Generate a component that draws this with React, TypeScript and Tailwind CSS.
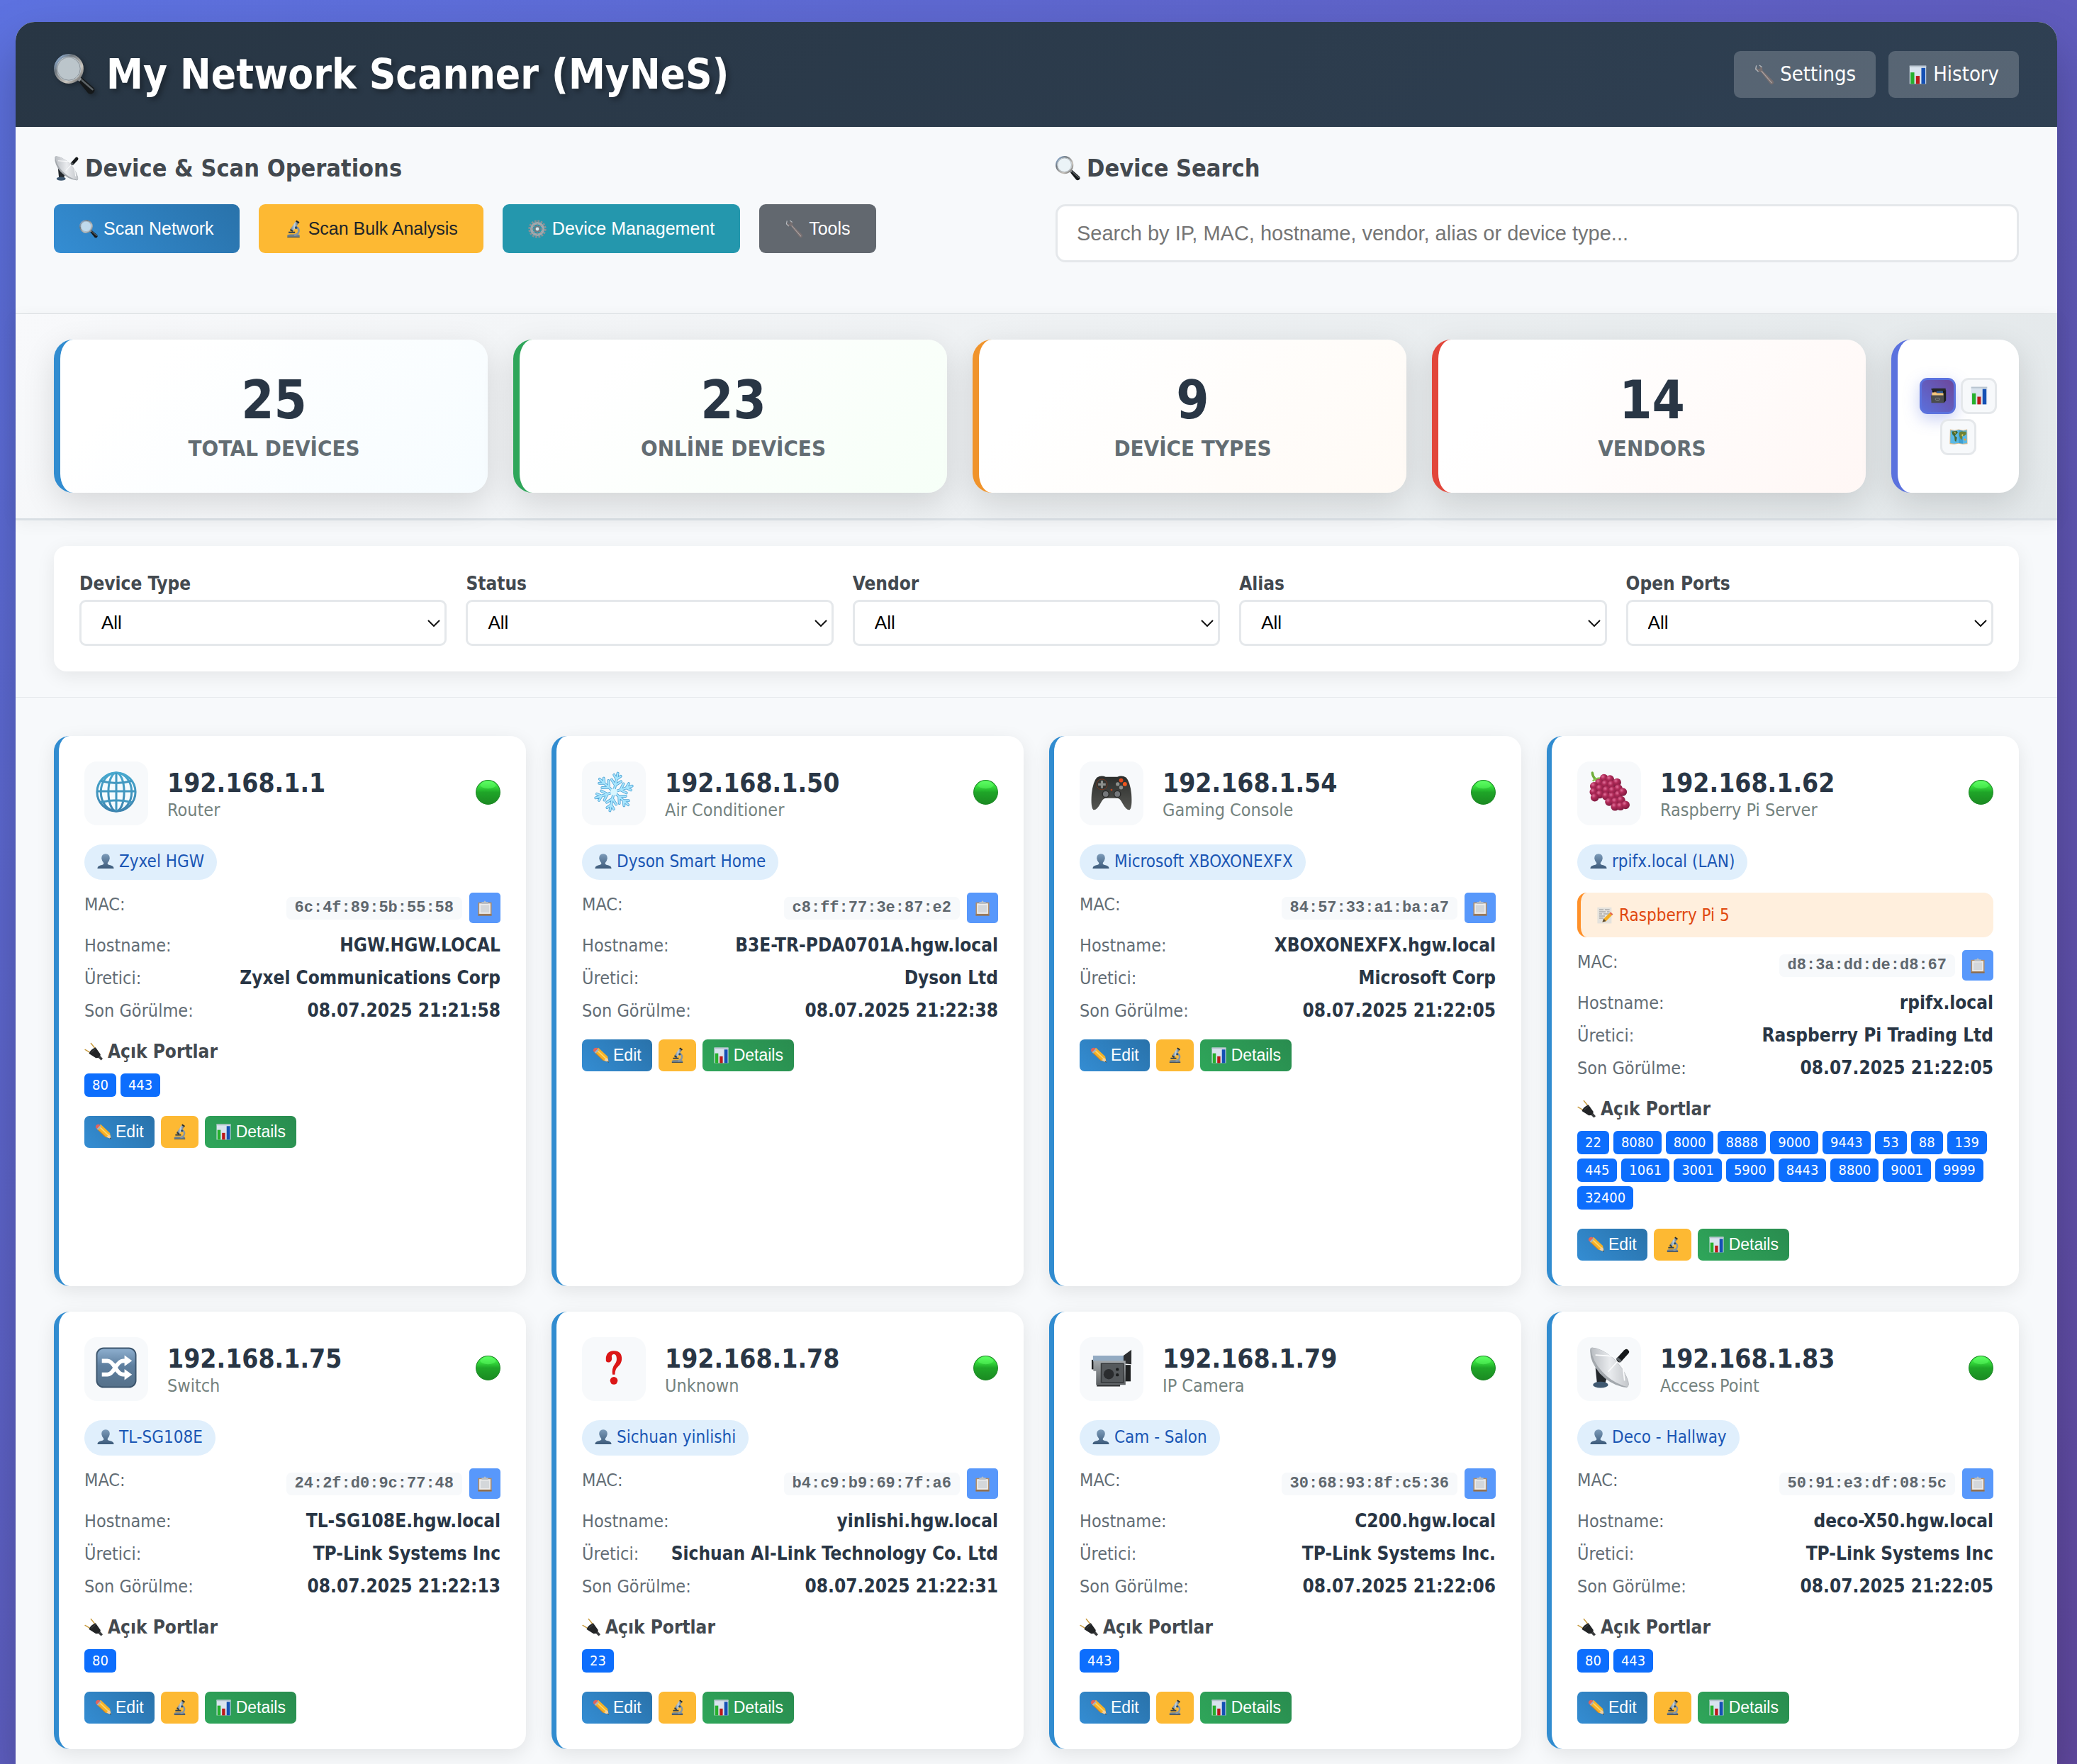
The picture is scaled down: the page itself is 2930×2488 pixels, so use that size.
import React from "react";

const SANS =
  "font-['DejaVu_Sans_Condensed','DejaVu_Sans',sans-serif]";

type IconName =
  | "magnifier"
  | "dish"
  | "microscope"
  | "gear"
  | "wrench"
  | "chart"
  | "filebox"
  | "map"
  | "globe"
  | "snowflake"
  | "gamepad"
  | "grapes"
  | "shuffle"
  | "question"
  | "camera"
  | "person"
  | "clipboard"
  | "plug"
  | "pencil"
  | "memo"
  | "online";

function Defs() {
  return (
    <svg width="0" height="0" className="absolute" aria-hidden="true">
      <defs>
        <linearGradient id="metal" x1="0" y1="0" x2="1" y2="1">
          <stop offset="0" stopColor="#9cc3f0" />
          <stop offset="0.3" stopColor="#6d757c" />
          <stop offset="0.7" stopColor="#c9c4bd" />
          <stop offset="1" stopColor="#55595c" />
        </linearGradient>
        <linearGradient id="dishFace" x1="0" y1="0" x2="1" y2="0">
          <stop offset="0" stopColor="#b9bdc2" />
          <stop offset="0.5" stopColor="#e9ebee" />
          <stop offset="1" stopColor="#c4c7cb" />
        </linearGradient>
        <linearGradient id="steel" x1="0" y1="0" x2="1" y2="0">
          <stop offset="0" stopColor="#5d7183" />
          <stop offset="0.5" stopColor="#c4d2dc" />
          <stop offset="1" stopColor="#4a5b6a" />
        </linearGradient>
        <linearGradient id="greenBall" x1="0" y1="0" x2="0" y2="1">
          <stop offset="0" stopColor="#5dff63" />
          <stop offset="0.25" stopColor="#35dd3c" />
          <stop offset="0.5" stopColor="#1fa528" />
          <stop offset="1" stopColor="#1b8a22" />
        </linearGradient>
        <linearGradient id="personFill" x1="0" y1="0" x2="0" y2="1">
          <stop offset="0" stopColor="#7d9cba" />
          <stop offset="1" stopColor="#3c5a7a" />
        </linearGradient>
        <linearGradient id="tile" x1="0" y1="0" x2="0" y2="1">
          <stop offset="0" stopColor="#8fb0d0" />
          <stop offset="0.45" stopColor="#5e7f9f" />
          <stop offset="1" stopColor="#557089" />
        </linearGradient>
        <linearGradient id="padBody" x1="0" y1="0" x2="0" y2="1">
          <stop offset="0" stopColor="#2b2d2b" />
          <stop offset="1" stopColor="#555652" />
        </linearGradient>
        <radialGradient id="grape" cx="0.35" cy="0.3" r="0.8">
          <stop offset="0" stopColor="#e0709a" />
          <stop offset="0.35" stopColor="#b02a58" />
          <stop offset="1" stopColor="#74163a" />
        </radialGradient>
        <linearGradient id="camBody" x1="0" y1="0" x2="0" y2="1">
          <stop offset="0" stopColor="#a3a8ab" />
          <stop offset="1" stopColor="#5c6063" />
        </linearGradient>
        <linearGradient id="glove" x1="0" y1="0" x2="0" y2="1">
          <stop offset="0" stopColor="#48a9cf" />
          <stop offset="1" stopColor="#3d83ae" />
        </linearGradient>
      </defs>
    </svg>
  );
}

const GRAPES: [number, number][] = [
  [9, 4], [12.5, 4.6], [6.2, 6.6], [9.8, 7.4], [13.4, 7.8], [16.6, 6.4], [3.2, 8.6], [6.6, 10],
  [10.4, 11], [14, 11.2], [17.4, 10], [3, 12], [6.6, 13.4], [10.2, 14.4], [13.8, 14.6],
  [17.4, 13.6], [20, 12], [3.6, 15.2], [12, 17.8], [15.6, 17.6], [19, 16.8], [15.4, 20.6], [18.6, 20.4], [21.6, 19.6],
];

const drawings: Record<IconName, React.ReactNode> = {
  magnifier: (
    <>
      <path d="M14 15.6 16 13.6 23.2 19.8Q24.4 21.4 23 22.8 21.6 24 20 23Z" fill="#15181a" />
      <path d="M16.4 15.4 22.6 20.8" stroke="#5c6266" strokeWidth="1" strokeLinecap="round" />
      <path d="M13.4 13.4 15.6 15.4" stroke="#8d9195" strokeWidth="2.2" />
      <circle cx="8.7" cy="8.7" r="7.9" fill="#e8f1f6" fillOpacity="0.78" stroke="url(#metal)" strokeWidth="1.5" />
      <circle cx="8.7" cy="8.7" r="6.7" fill="none" stroke="#8b9298" strokeWidth="0.4" />
    </>
  ),
  dish: (
    <>
      <path d="M4 12 10.6 18 9.4 22H5Z" fill="#23282c" />
      <ellipse cx="7" cy="22" rx="4.4" ry="1.8" fill="#3f5870" />
      <path d="M1 0.8Q0.2 8 6.6 15.4 13.6 22.8 22.4 23.6 24 22.8 23.2 20 21 12.6 14.4 6.4 7.6 0.6 2 0.2Z" fill="#a3a8ad" />
      <path d="M1.4 0.8Q2 8 8 14.4 14 21 22.6 23.2 23.8 22.4 22.8 19.4 20.6 12.4 14.2 6.4 7.6 0.6 2 0.4Z" fill="url(#dishFace)" />
      <path d="M19.4 5.6 4 4.6M19.4 5.6 11.4 14.4M19.4 5.6 21 19.6" stroke="#fbfcfd" strokeWidth="0.7" />
      <path d="M18 7.2 22 2.8" stroke="#15181a" strokeWidth="3.2" strokeLinecap="round" />
      <path d="M17.2 8 18.2 6.8" stroke="#5c6266" strokeWidth="3.2" />
    </>
  ),
  microscope: (
    <>
      <path d="M4 20.4Q4 19 8 19H17Q20 19 20 20.6V22.6H4Z" fill="#6d7f8d" />
      <path d="M4 22H20V23H4Z" fill="#3f4c57" />
      <path d="M15 9Q21 12 18 17.4 16.4 19.6 13 20" fill="none" stroke="#8796a3" strokeWidth="2.6" />
      <path d="M5.6 15.4H14V17.4H5.6Z" fill="#34414b" />
      <path d="M14.8 2 18.6 4.4 11.8 14.6 8 12.2Z" fill="url(#steel)" />
      <path d="M16 0.6 19.8 3 18.8 4.8 14.8 2.2Z" fill="#20272c" />
      <path d="M8.2 11.8 11.8 14.2 10.6 15.8 7.4 13.8Z" fill="#2d3840" />
      <circle cx="15.4" cy="10.2" r="1.7" fill="#2c4d6e" />
    </>
  ),
  gear: (
    <>
      <circle cx="12" cy="12" r="10.4" fill="none" stroke="#8a9197" strokeWidth="2.6" strokeDasharray="2.6 1.484" />
      <circle cx="12" cy="12" r="7.6" fill="none" stroke="#a2a8ad" strokeWidth="3.4" />
      <path d="M12 4.5V19.5M4.5 12H19.5M6.7 6.7 17.3 17.3M17.3 6.7 6.7 17.3" stroke="#868d93" strokeWidth="1" />
      <circle cx="12" cy="12" r="4.2" fill="#737b82" />
      <circle cx="12" cy="12" r="2.2" fill="#d8eef2" />
    </>
  ),
  wrench: (
    <>
      <path
        d="M3 1.2 2.2 5.4 5.4 8.4 8.2 8.4 19 22.4Q21 24.2 22.8 22.4 24 20.6 22.6 19L10.4 7.2 9.8 3.2 6.6 0.8 7.4 4.4 5.8 5.6 4 4.6Z"
        fill="#776f70"
      />
      <path d="M9 7.6 21.2 21.6" stroke="#aca4a4" strokeWidth="1" />
      <path d="M3 1.2 2.2 5.4 5.4 8.4M6.6 0.8 9.8 3.2" fill="none" stroke="#b9bfc4" strokeWidth="1" />
    </>
  ),
  chart: (
    <>
      <path d="M1.6 0.6H22.4V23.4H1.6Z" fill="#d9e3ee" />
      <path d="M1.6 0.6H22.4V2.4H1.6Z" fill="#b8c4cf" />
      <path d="M2.8 9H7.6V23.4H2.8Z" fill="#25b02d" />
      <path d="M9.6 13.4H14.2V23.4H9.6Z" fill="#bb1919" />
      <path d="M16.4 3.4H21.4V23.4H16.4Z" fill="#1450b4" />
    </>
  ),
  filebox: (
    <>
      <path d="M2 2.6 5 1.8H22.6L23 5 4 5.6Z" fill="#26282a" />
      <path d="M4 5H22V12H4Z" fill="#15181c" />
      <path d="M6 6.4H13L14 5.4H18V9H6Z" fill="#8d5340" />
      <path d="M10 5.6H19V8.4H10Z" fill="#2a5b96" />
      <path d="M3.4 7.6H9L10 8.6H19.6V12H3.4Z" fill="#f0c67c" />
      <path d="M20 8 23.2 4V19L20 22.4Z" fill="#1d1f21" />
      <path d="M1.8 11.4H20.2V22.2H2.6Z" fill="#4a4c4e" />
      <rect x="8.2" y="15.4" width="6" height="3" rx="1.2" fill="none" stroke="#86898c" strokeWidth="0.9" />
    </>
  ),
  map: (
    <>
      <path d="M0.8 2.4 6.6 3.4 12 2.2 17.6 3.4 23.2 2.2 23.6 21.4 17.6 22 12 21 6.4 22 0.4 21.4Z" fill="#d9b98a" />
      <path d="M1.6 3.6 6.6 4.4 12 3.2 17.6 4.4 22.6 3.4 23 20.4 17.6 21 12 20 6.4 21 1.2 20.4Z" fill="#5ab9e6" />
      <path d="M12 3.2 17.6 4.4V21L12 20Z" fill="#3f9fd2" />
      <path d="M3 5 10 4.6 11 6.6 8 9.4 7.4 11 10 13 8.6 18.6 7 17 6.6 12 4 9Z" fill="#49682e" />
      <path d="M12.4 7 15 5 21.6 5.4 22 8.6 19 11.4 17 10 16.4 15.6 14.6 15 13 11Z" fill="#6d8234" />
      <path d="M5.6 6.6 8 6V8ZM15.6 9.4 18 8.4 17 12Z" fill="#ecd56a" />
      <path d="M18.8 14.4 21.6 14.6 21.2 17 19 16.6Z" fill="#e7a53a" />
    </>
  ),
  globe: (
    <g fill="none" stroke="url(#glove)" strokeWidth="1.25">
      <circle cx="12" cy="12" r="11.2" fill="#f4fbfe" />
      <ellipse cx="12" cy="12" rx="4.6" ry="11.2" />
      <ellipse cx="12" cy="12" rx="9" ry="11.2" />
      <path d="M12 0.8V23.2M0.8 11.6H23.2M3 5.6Q12 8 21 5.6M3 18Q12 15.8 21 18" stroke="#4298c0" />
    </g>
  ),
  snowflake: (
    <>
      {[12, 72, 132, 192, 252, 312].map((a) => (
        <g key={a} transform={`rotate(${a} 12 12)`} fill="none" strokeLinecap="round" strokeLinejoin="round">
          <path d="M12 12V0.8M12 8 9.2 5.2M12 8 14.8 5.2M12 4.4 10 2.2M12 4.4 14 2.2" stroke="#4fa3d6" strokeWidth="1.6" />
          <path d="M12 12V0.8M12 8 9.2 5.2M12 8 14.8 5.2M12 4.4 10 2.2M12 4.4 14 2.2" stroke="#a9e6fd" strokeWidth="0.9" />
        </g>
      ))}
      <circle cx="12" cy="12" r="2" fill="#d8f6ff" />
    </>
  ),
  gamepad: (
    <>
      <path
        d="M3.4 3.6Q6 2 8.6 3.2H15.4Q18 2 20.6 3.6 22.8 6 23.6 13 24.2 21 22.6 22.4 20.8 23 18.4 18.6 17 15.8 15.6 15.6H8.4Q7 15.8 5.6 18.6 3.2 23 1.4 22.4-0.2 21 0.4 13 1.2 6 3.4 3.6Z"
        fill="url(#padBody)"
      />
      <circle cx="6.4" cy="7.6" r="3.1" fill="#333533" stroke="#7a3a22" strokeWidth="0.4" />
      <path d="M6.4 5.4V9.8M4.2 7.6H8.6" stroke="#8c8f8c" strokeWidth="1.3" />
      <circle cx="17.6" cy="5.2" r="1.2" fill="#e3491d" />
      <circle cx="19.8" cy="7.4" r="1.2" fill="#f0571f" />
      <circle cx="15.6" cy="7.4" r="1.1" fill="#8c8f8c" />
      <circle cx="17.6" cy="9.4" r="1.1" fill="#8c8f8c" />
      <circle cx="12" cy="10.8" r="0.6" fill="#c2461f" />
      <circle cx="8.6" cy="13.2" r="1.9" fill="#74777a" stroke="#2a2b2a" strokeWidth="0.6" />
      <circle cx="15.4" cy="13.2" r="1.9" fill="#74777a" stroke="#2a2b2a" strokeWidth="0.6" />
    </>
  ),
  grapes: (
    <>
      <path d="M2.2 0.8Q2.4 5 8.4 7" fill="none" stroke="#6fae3a" strokeWidth="1.4" strokeLinecap="round" />
      <path d="M2.4 5.6Q5 3.4 8 4" fill="none" stroke="#89c24e" strokeWidth="1" />
      {GRAPES.map(([x, y]) => (
        <circle key={`${x}-${y}`} cx={x} cy={y} r="2.4" fill="url(#grape)" />
      ))}
    </>
  ),
  shuffle: (
    <>
      <rect x="0.6" y="0.6" width="22.8" height="22.8" rx="4" fill="url(#tile)" stroke="#3d566e" strokeWidth="0.8" />
      <path d="M3.6 8H6.8Q9 8 11.4 12 13.8 16 16 16H17.6M3.6 16H6.8Q9 16 11.4 12 13.8 8 16 8H17.6" fill="none" stroke="#fff" strokeWidth="2.4" />
      <path d="M16.8 4.8 21.2 8 16.8 11.2ZM16.8 12.8 21.2 16 16.8 19.2Z" fill="#fff" />
    </>
  ),
  question: (
    <>
      <path d="M7.4 8.2Q6.8 2.4 12 2.2 16.8 2.2 16.6 7.2 16.4 9.6 14.4 11.4 12.6 13 12.6 16H11.2Q10.6 12.4 12.6 9.8 13.8 8.4 13.6 6.4 13.4 4 11.6 4.2 10.4 4.4 10.8 6.2 11 8 9.6 8.8 7.8 9.2 7.4 8.2Z" fill="#db1717" />
      <circle cx="12" cy="19.6" r="2.2" fill="#db1717" />
    </>
  ),
  camera: (
    <>
      <path d="M17 6.4 23.6 1.6V10L17 9.4Z" fill="#2d2f31" />
      <path d="M19.4 10.4H23.2V20H19.4Z" fill="#1f2122" />
      <path d="M0.4 7.4H3V13H0.4Z" fill="#202224" />
      <path d="M1.2 5H19V8.4H1.2Z" fill="#93abc2" />
      <path d="M1.4 8H20.2V22H3V14H1.4Z" fill="url(#camBody)" />
      <path d="M6 9.6H19V20.6H6Z" fill="#55595c" stroke="#333638" strokeWidth="0.6" />
      <circle cx="10.4" cy="15.8" r="3" fill="#2a2c2e" />
      <circle cx="15.4" cy="13" r="0.9" fill="#1b1d1e" />
      <circle cx="15.4" cy="16.2" r="0.9" fill="#1b1d1e" />
      <path d="M3.4 22H17V23H3.4Z" fill="#2a2c2e" />
    </>
  ),
  person: (
    <path
      d="M12 1.2Q18 1.4 17.8 7.8 17.2 12 14.8 14V15.8Q15.8 17 19.4 17.6 23.2 18.6 23.6 22H0.4Q0.8 18.6 4.6 17.6 8.2 17 9.2 15.8V14Q6.8 12 6.2 7.8 6 1.4 12 1.2Z"
      fill="url(#personFill)"
    />
  ),
  clipboard: (
    <>
      <path d="M1.6 3H22.4V23.4H1.6Z" fill="#b08d68" />
      <path d="M1.6 21.4H22.4V23.4H1.6Z" fill="#8b6b4c" />
      <path d="M3.4 4.6H20.6V20.6H3.4Z" fill="#ececec" />
      <path d="M5.4 7H18.6V18.6H5.4Z" fill="#d4d7da" />
      <path d="M7 2.4H10L12 0.4 14 2.4H17V5.4H7Z" fill="#b9bec3" />
    </>
  ),
  plug: (
    <>
      <path d="M1 9.6 9 14.4M8.6 1.4 14.6 8.8" stroke="#c79a3d" strokeWidth="1.3" strokeLinecap="round" />
      <path d="M14.6 6.6 21 15.6 20.6 18.4 18.2 20.4 15 20.6 6 14.8Q7.6 9.4 14.6 6.6Z" fill="#222426" />
      <path d="M18 20 20.8 17.8 24 21.4 21.8 23.6Z" fill="#3a3c3e" />
      <path d="M9 13.4 14.6 8.4" stroke="#4b4e50" strokeWidth="0.9" />
    </>
  ),
  pencil: (
    <>
      <path d="M5.6 3.4 8.4 0.8 22 13.6 23.4 21.6 15.6 19.6 2.4 7Z" fill="#f6b127" />
      <path d="M6.4 4.4 20 17.2" stroke="#ffd766" strokeWidth="1.8" />
      <path d="M3.6 8 16 19.8" stroke="#c7812a" strokeWidth="1.1" />
      <path d="M19.4 20.6 23.6 21.8 22.6 17.4 20.6 15.6 17.2 19Z" fill="#f0cfa3" />
      <path d="M21.8 21.4 23.8 22.6 23 20.2Z" fill="#2a2a2a" />
      <path d="M4.6 9 9.4 3.8 7.4 2 2.6 7.2Z" fill="#a6b3bd" />
      <path d="M2.8 7.4 7.8 2.2 5.8 0.8Q3.4 0.6 1.8 2.2 0.4 4 1 5.8Z" fill="#e2635c" />
    </>
  ),
  memo: (
    <>
      <path d="M1.4 0.8H21.4V23.4H1.4Z" fill="#e4e2dd" />
      <path d="M4 4H10M12 4H18.6M4 7H13M15 7H18.6M4 10H8M10 10H18M4 13H12M4 16H10" stroke="#8d8f91" strokeWidth="1" />
      <path d="M20 7.6 23.4 10.6 13.6 20.2 8.4 21.6 10.4 16.8Z" fill="#f4ad22" />
      <path d="M10.4 16.8 13.6 20.2 8.4 21.6Z" fill="#5a4b38" />
      <path d="M20 7.6 23.4 10.6 22 12 18.6 9Z" fill="#e2635c" />
    </>
  ),
  online: (
    <>
      <circle cx="12" cy="12" r="11.6" fill="url(#greenBall)" stroke="#1d8a26" strokeWidth="0.7" />
      <ellipse cx="12" cy="5" rx="7.4" ry="3.4" fill="#63ff6a" fillOpacity="0.45" />
    </>
  ),
};

function Icon({ name, className }: { name: IconName; className: string }) {
  return (
    <svg viewBox="0 0 24 24" aria-hidden="true" className={`shrink-0 overflow-visible ${className}`}>
      {drawings[name]}
    </svg>
  );
}

function Header() {
  const button =
    "flex h-[66px] cursor-pointer items-center gap-2 rounded-[9px] bg-white/20 px-7 text-[29px] text-white";
  return (
    <header className="flex h-[148px] items-center justify-between rounded-t-[27px] bg-[linear-gradient(135deg,#283644,#2f4053)] px-[54px]">
      <h1 className="flex items-center gap-4 text-[58px] font-bold text-white [text-shadow:4px_4px_7px_rgba(0,0,0,0.3)]">
        <Icon name="magnifier" className="size-[58px] drop-shadow-[3px_3px_3px_rgba(0,0,0,0.3)]" />
        My Network Scanner (MyNeS)
      </h1>
      <nav className="flex gap-[18px]">
        <button className={button}>
          <Icon name="wrench" className="size-[29px]" />
          Settings
        </button>
        <button className={button}>
          <Icon name="chart" className="size-[27px]" />
          History
        </button>
      </nav>
    </header>
  );
}

const operations: { icon: IconName; label: string; tone: string }[] = [
  { icon: "magnifier", label: "Scan Network", tone: "bg-[linear-gradient(45deg,#348dd3,#2972aa)] text-white" },
  { icon: "microscope", label: "Scan Bulk Analysis", tone: "bg-[#fdb933] text-[#212529]" },
  { icon: "gear", label: "Device Management", tone: "bg-[#2497ad] text-white" },
  { icon: "wrench", label: "Tools", tone: "bg-[#62686f] text-white" },
];

function Controls() {
  const heading = "mb-[29px] flex items-center gap-[9px] text-[34px] leading-[44px] font-bold text-[#43494f]";
  return (
    <section className="grid grid-cols-2 gap-[54px] border-b border-[#dfe3e6] px-[54px] pt-9 pb-18">
      <div>
        <h2 className={heading}>
          <Icon name="dish" className="size-[35px]" />
          Device &amp; Scan Operations
        </h2>
        <div className="flex flex-wrap gap-[27px]">
          {operations.map((o) => (
            <button
              key={o.label}
              className={`flex h-[69px] cursor-pointer items-center gap-2 rounded-[9px] px-9 font-['Liberation_Sans',sans-serif] text-[25px] ${o.tone}`}
            >
              <Icon name={o.icon} className="size-[26px]" />
              {o.label}
            </button>
          ))}
        </div>
      </div>
      <div>
        <h2 className={heading}>
          <Icon name="magnifier" className="size-[35px]" />
          <label htmlFor="search">Device Search</label>
        </h2>
        <input
          id="search"
          type="text"
          placeholder="Search by IP, MAC, hostname, vendor, alias or device type..."
          className="h-[82px] w-full rounded-[14px] border-[3px] border-[#e5e8eb] bg-white px-[27px] font-['Liberation_Sans',sans-serif] text-[29px] placeholder:text-[#757575]"
        />
      </div>
    </section>
  );
}

const stats = [
  { value: 25, label: "TOTAL DEVİCES", tone: "border-l-[#318cd0] bg-[linear-gradient(135deg,#fff_20%,#f6fcff)]" },
  { value: 23, label: "ONLİNE DEVİCES", tone: "border-l-[#2fa65a] bg-[linear-gradient(135deg,#fff_20%,#f6fff7)]" },
  { value: 9, label: "DEVİCE TYPES", tone: "border-l-[#f0932b] bg-[linear-gradient(135deg,#fff_20%,#fffaf5)]" },
  { value: 14, label: "VENDORS", tone: "border-l-[#e2463a] bg-[linear-gradient(135deg,#fff_20%,#fff7f5)]" },
];

function Stats() {
  const card = "rounded-[27px] border-l-[9px] shadow-[0_14px_45px_rgba(0,0,0,0.13)]";
  const view = "grid size-[51px] cursor-pointer place-items-center rounded-[11px] border-[3px]";
  return (
    <section className="flex gap-9 border-b-[3px] border-[#d9dfe4] bg-[linear-gradient(135deg,#f8f9fb,#e3e8ea)] px-[54px] py-9 shadow-[0_4px_22px_rgba(0,0,0,0.05)]">
      {stats.map((s) => (
        <div key={s.label} className={`flex-1 pt-12 pb-[45px] text-center ${card} ${s.tone}`}>
          <div className="text-[74px] leading-[74px] font-bold text-[#293645]">{s.value}</div>
          <div className="mt-[13px] text-[31px] leading-9 font-bold text-[#636d73]">{s.label}</div>
        </div>
      ))}
      <div className={`flex w-[180px] flex-wrap content-center justify-center gap-[7px] border-l-[#5b72de] bg-white px-7 ${card}`}>
        <button
          aria-label="Card view"
          className={`border-[#5b72de] bg-[linear-gradient(45deg,#5b70dc,#6d479b)] shadow-[0_7px_22px_rgba(91,114,222,0.35)] ${view}`}
        >
          <Icon name="filebox" className="size-[24px]" />
        </button>
        <button aria-label="Table view" className={`border-[#e5e8eb] bg-[#f7f9fb] ${view}`}>
          <Icon name="chart" className="size-[26px]" />
        </button>
        <button aria-label="Map view" className={`border-[#e5e8eb] bg-[#f7f9fb] ${view}`}>
          <Icon name="map" className="size-[26px]" />
        </button>
      </div>
    </section>
  );
}

function Filters() {
  return (
    <section className="border-b border-[#e5e8eb] px-[54px] py-9">
      <div className="grid grid-cols-5 gap-[27px] rounded-[18px] bg-white p-9 shadow-[0_7px_27px_rgba(0,0,0,0.08)]">
        {["Device Type", "Status", "Vendor", "Alias", "Open Ports"].map((label) => {
          const id = label.toLowerCase().replace(" ", "-");
          return (
            <div key={id}>
              <label htmlFor={id} className="mb-[6px] block text-[26px] leading-[34px] font-bold text-[#43494f]">
                {label}
              </label>
              <div className="relative">
                <select
                  id={id}
                  className="block h-[65px] w-full appearance-none rounded-[9px] border-[3px] border-[#e5e8eb] bg-white px-7 font-['Liberation_Sans',sans-serif] text-[26px] text-black"
                >
                  <option>All</option>
                </select>
                <svg
                  viewBox="0 0 18 10"
                  className="pointer-events-none absolute top-[28px] right-[9px] h-[10px] w-[18px]"
                  aria-hidden="true"
                >
                  <path d="M1 1 9 9 17 1" fill="none" stroke="#111" strokeWidth="2" />
                </svg>
              </div>
            </div>
          );
        })}
      </div>
    </section>
  );
}

interface Device {
  ip: string;
  type: string;
  icon: IconName;
  alias: string;
  note?: string;
  mac: string;
  host: string;
  vendor: string;
  seen: string;
  ports: number[];
}

const devices: Device[] = [
  { ip: "192.168.1.1", type: "Router", icon: "globe", alias: "Zyxel HGW", mac: "6c:4f:89:5b:55:58", host: "HGW.HGW.LOCAL", vendor: "Zyxel Communications Corp", seen: "08.07.2025 21:21:58", ports: [80, 443] },
  { ip: "192.168.1.50", type: "Air Conditioner", icon: "snowflake", alias: "Dyson Smart Home", mac: "c8:ff:77:3e:87:e2", host: "B3E-TR-PDA0701A.hgw.local", vendor: "Dyson Ltd", seen: "08.07.2025 21:22:38", ports: [] },
  { ip: "192.168.1.54", type: "Gaming Console", icon: "gamepad", alias: "Microsoft XBOXONEXFX", mac: "84:57:33:a1:ba:a7", host: "XBOXONEXFX.hgw.local", vendor: "Microsoft Corp", seen: "08.07.2025 21:22:05", ports: [] },
  { ip: "192.168.1.62", type: "Raspberry Pi Server", icon: "grapes", alias: "rpifx.local (LAN)", note: "Raspberry Pi 5", mac: "d8:3a:dd:de:d8:67", host: "rpifx.local", vendor: "Raspberry Pi Trading Ltd", seen: "08.07.2025 21:22:05", ports: [22, 8080, 8000, 8888, 9000, 9443, 53, 88, 139, 445, 1061, 3001, 5900, 8443, 8800, 9001, 9999, 32400] },
  { ip: "192.168.1.75", type: "Switch", icon: "shuffle", alias: "TL-SG108E", mac: "24:2f:d0:9c:77:48", host: "TL-SG108E.hgw.local", vendor: "TP-Link Systems Inc", seen: "08.07.2025 21:22:13", ports: [80] },
  { ip: "192.168.1.78", type: "Unknown", icon: "question", alias: "Sichuan yinlishi", mac: "b4:c9:b9:69:7f:a6", host: "yinlishi.hgw.local", vendor: "Sichuan AI-Link Technology Co. Ltd", seen: "08.07.2025 21:22:31", ports: [23] },
  { ip: "192.168.1.79", type: "IP Camera", icon: "camera", alias: "Cam - Salon", mac: "30:68:93:8f:c5:36", host: "C200.hgw.local", vendor: "TP-Link Systems Inc.", seen: "08.07.2025 21:22:06", ports: [443] },
  { ip: "192.168.1.83", type: "Access Point", icon: "dish", alias: "Deco - Hallway", mac: "50:91:e3:df:08:5c", host: "deco-X50.hgw.local", vendor: "TP-Link Systems Inc", seen: "08.07.2025 21:22:05", ports: [80, 443] },
];

function Row({ label, value }: { label: string; value: string }) {
  return (
    <div className="flex justify-between leading-[37px] whitespace-nowrap">
      <dt className="text-[25px] text-[#636d75]">{label}</dt>
      <dd className="text-[26px] font-bold text-[#293645]">{value}</dd>
    </div>
  );
}

function DeviceCard({ device }: { device: Device }) {
  const action =
    "flex h-[45px] cursor-pointer items-center gap-[6px] rounded-[7px] px-[15px] font-['Liberation_Sans',sans-serif] text-[23px] text-white";
  return (
    <article className="rounded-[22px] border-l-[7px] border-[#318cd0] bg-white p-9 shadow-[0_7px_27px_rgba(0,0,0,0.09)]">
      <div className="mb-[27px] flex items-center">
        <div className="mr-[27px] grid size-[90px] place-items-center rounded-[18px] bg-[#f7f9fb] pb-1">
          <Icon name={device.icon} className="size-[58px]" />
        </div>
        <div className="flex-1 pt-1">
          <h3 className="text-[37px] leading-[44px] font-bold text-[#293645]">{device.ip}</h3>
          <p className="text-[25px] leading-8 text-[#75837f]">{device.type}</p>
        </div>
        <Icon name="online" className="mb-1 size-[35px]" />
      </div>
      <div className="mb-[18px] flex h-[50px] w-fit items-center gap-[7px] rounded-[27px] bg-[#e0effc] px-[18px] pb-[2px] text-[24px] text-[#1a56b4]">
        <Icon name="person" className="size-[24px]" />
        {device.alias}
      </div>
      {device.note && (
        <div className="mb-[18px] flex h-[63px] items-center gap-[8px] rounded-[14px] border-l-[5px] border-[#ff9029] bg-[#ffefdd] px-[22px] text-[24px] text-[#e0480f]">
          <Icon name="memo" className="size-[24px]" />
          {device.note}
        </div>
      )}
      <dl className="mb-[22px] flex flex-col gap-[9px]">
        <div className="flex h-[47px] items-start justify-between">
          <dt className="text-[25px] leading-[34px] text-[#636d75]">MAC:</dt>
          <dd className="flex items-center gap-[10px]">
            <code className="rounded-[7px] bg-[#f7f9fb] px-3 font-['Liberation_Mono',monospace] text-[22px] leading-8 font-bold text-[#5f676e]">
              {device.mac}
            </code>
            <button
              aria-label={`Copy ${device.mac}`}
              className="grid h-[43px] w-[44px] cursor-pointer place-items-center rounded-[5px] bg-[#5898fb]"
            >
              <Icon name="clipboard" className="size-[22px]" />
            </button>
          </dd>
        </div>
        <Row label="Hostname:" value={device.host} />
        <Row label="Üretici:" value={device.vendor} />
        <Row label="Son Görülme:" value={device.seen} />
      </dl>
      {device.ports.length > 0 && (
        <div className="mb-[27px]">
          <h4 className="mb-[14px] flex items-center gap-[7px] text-[26px] leading-[34px] font-bold text-[#43494f]">
            <Icon name="plug" className="size-[26px]" />
            Açık Portlar
          </h4>
          <ul className="flex flex-wrap gap-x-[6px] gap-y-[6px]">
            {device.ports.map((p) => (
              <li key={p} className="rounded-[6px] bg-[#0d6efd] px-[11px] text-[20px] leading-[33px] text-white">
                {p}
              </li>
            ))}
          </ul>
        </div>
      )}
      <div className="flex gap-[9px]">
        <button className={`bg-[linear-gradient(45deg,#348dd3,#2972aa)] ${action}`}>
          <Icon name="pencil" className="size-[23px]" />
          Edit
        </button>
        <button aria-label="Analyze" className={`bg-[#fdb933] ${action}`}>
          <Icon name="microscope" className="size-[23px]" />
        </button>
        <button className={`bg-[linear-gradient(45deg,#2fa65a,#298c4f)] ${action}`}>
          <Icon name="chart" className="size-[23px]" />
          Details
        </button>
      </div>
    </article>
  );
}

export default function App() {
  return (
    <div
      className={`flex min-h-screen flex-col bg-[linear-gradient(135deg,#5d72e0,#6149a0)] pt-[31px] pr-7 pl-[22px] ${SANS}`}
    >
      <Defs />
      <main className="flex-1 rounded-t-[27px] bg-[#f7f9fb] shadow-[0_36px_72px_rgba(0,0,0,0.25)]">
        <Header />
        <Controls />
        <Stats />
        <Filters />
        <section className="grid grid-cols-[repeat(auto-fill,minmax(630px,1fr))] gap-9 px-[54px] pt-[54px] pb-4">
          {devices.map((d) => (
            <DeviceCard key={d.ip} device={d} />
          ))}
        </section>
      </main>
    </div>
  );
}
